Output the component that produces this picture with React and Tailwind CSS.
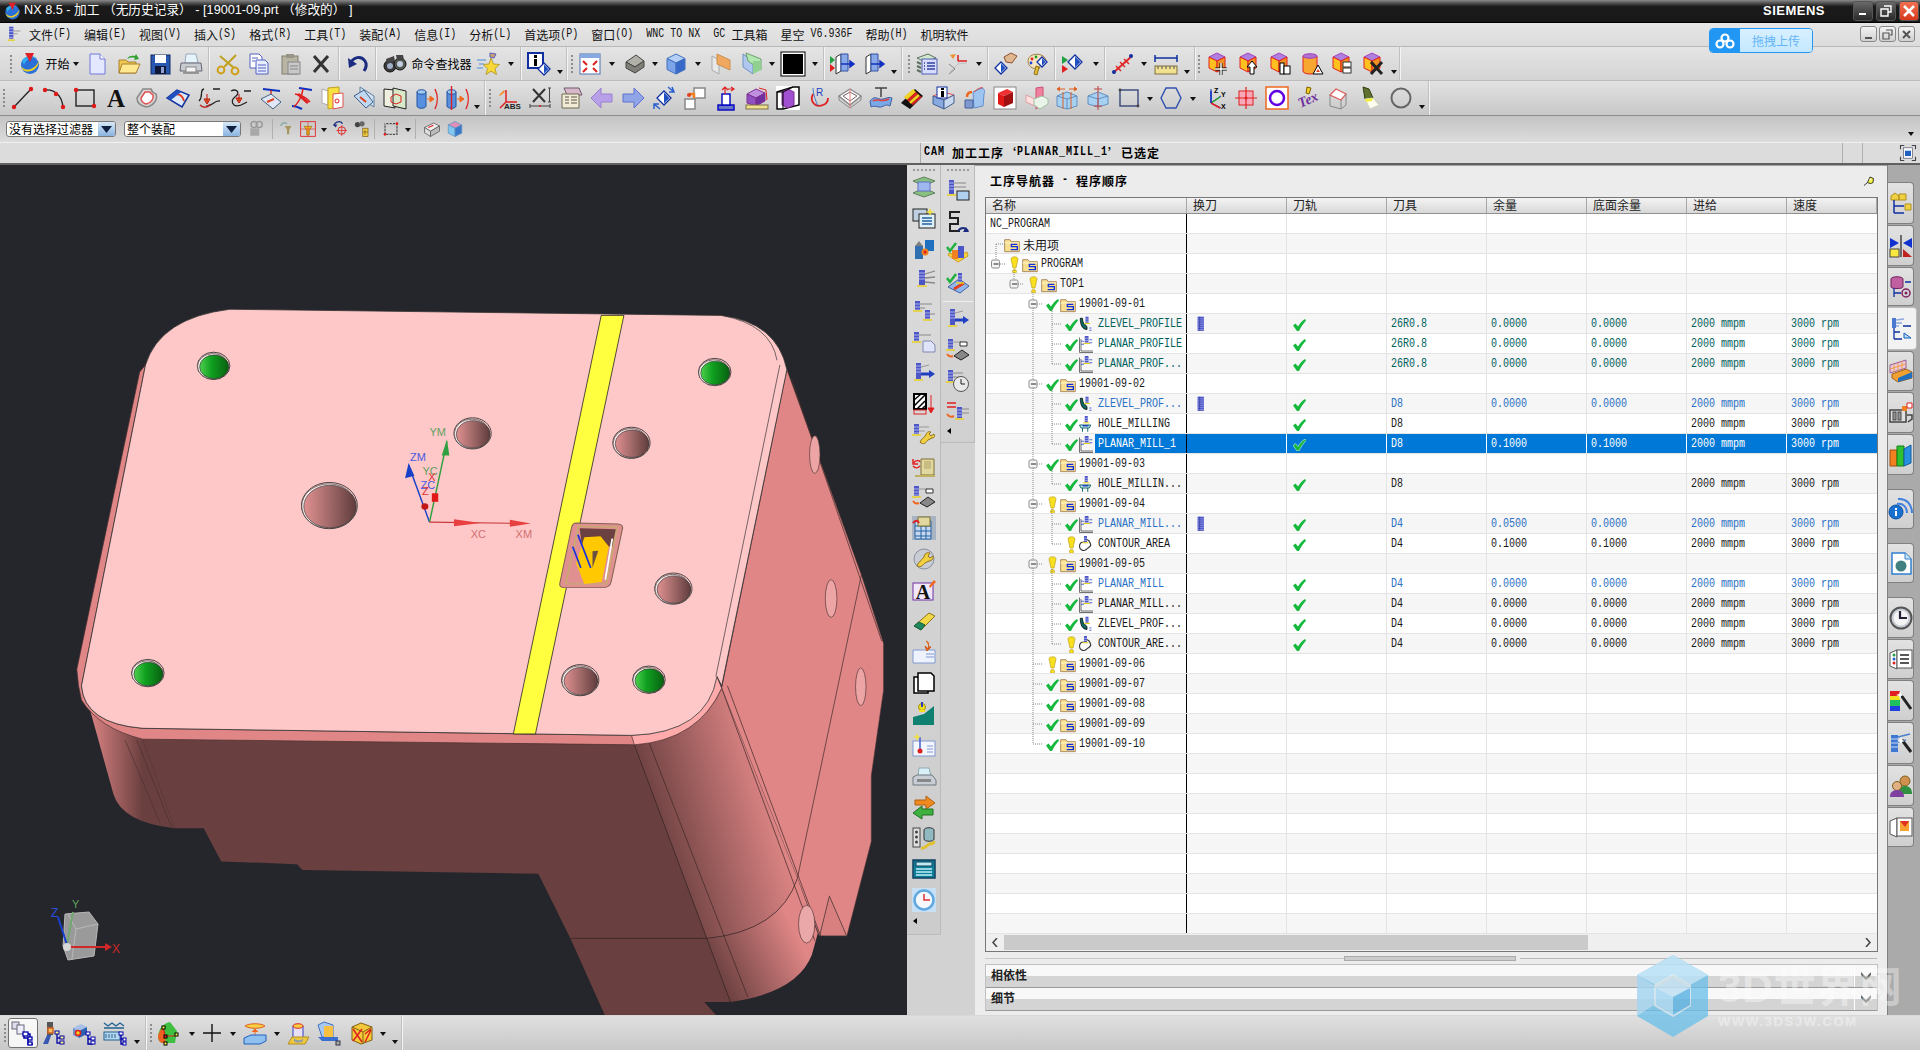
import React from "react";

const P = (d, f = "none", s = "none", w = 1) => <path d={d} fill={f} stroke={s} strokeWidth={w} />;
const R = (x, y, w, h, f = "none", s = "none", sw = 1) => <rect x={x} y={y} width={w} height={h} fill={f} stroke={s} strokeWidth={sw} />;
const C = (x, y, r, f = "none", s = "none", sw = 1) => <circle cx={x} cy={y} r={r} fill={f} stroke={s} strokeWidth={sw} />;
const mill = (x = 4, y = 2, h = 12, w = 5) => (
  <g>
    <rect x={x} y={y} width={w} height={h} fill="#4c56c6" />
    <path d={`M${x} ${y + 3}h${w}M${x} ${y + 6}h${w}M${x} ${y + 9}h${w}`} stroke="#c8ccf4" strokeWidth=".8" />
    <path d={`M${x - 2} ${y + h + 1}h${w + 4}`} stroke="#e8d020" strokeWidth="1.5" />
  </g>
);
const cube = (t, l, r, s = "none") => <g>{P("M12 2l9 4.5-9 4.5-9-4.5z", t, s)}{P("M3 6.5l9 4.5v11l-9-4.5z", l, s)}{P("M21 6.5l-9 4.5v11l9-4.5z", r, s)}</g>;
const pcube = (extra) => <g>{P("M11 1l8 4-8 4-8-4z", "#b080e0", "#a040c0")}{P("M3 5l8 4v11l-8-4z", "#ffc020", "#e02020")}{P("M19 5l-8 4v11l8-4z", "#f09020", "#e02020")}{extra}</g>;
const diamond = (x, y, r = 5) => <g>{P(`M${x} ${y - r}l${r} ${r}-${r} ${r}-${r}-${r}z`, "#fff", "#1030a0", 1.3)}{P(`M${x} ${y - r + 1.5}l${r - 1.5} ${r - 1.5}-${r - 1.5} ${r - 1.5}z`, "#2050c0")}</g>;
const dot = (x, y, r = 1.8) => C(x, y, r, "#e01818");
const folderIcon = (
  <g>{P("M1 4h8l2 3h12v15H1z", "#f8e090", "#a08050", 1.3)}{P("M1 9h22", "none", "#fff6c8", 1.5)}{P("M20 11h-9v3.500h9v4.500H10", "none", "#1030e0", 2)}</g>
);

const I = {
  logo: <g>{C(12, 13, 9, "#2a70d8")}{P("M3 14c5 7 14 3 18-5-1 9-10 13-16 9z", "#f0d020")}{P("M4 8c4-4 10-5 15-2-6-1-11 1-13 7z", "#30b0f0")}{P("M7 1h9l-4 9z", "#e02028")}</g>,
  new: <g>{P("M5 2h10l5 5v15H5z", "#e4e8ff", "#7078d8")}{P("M15 2v5h5", "#fff", "#7078d8")}</g>,
  open: <g>{P("M2 8h7l2 2h8v11H2z", "#f0c850", "#a88030")}{P("M5 12h18l-4 9H2z", "#ffe890", "#a88030")}{P("M10 7c1-3 5-4 8-3l1-2 3 5-5 1 1-2c-3-1-6 0-8 1z", "#30a030")}</g>,
  save: <g>{R(3, 3, 19, 19, "#2858b0", "#102860")}{R(7, 3, 11, 8, "#fff")}{R(7, 14, 11, 8, "#101838")}{R(13, 15, 3, 6, "#90a0d0")}</g>,
  print: <g>{P("M7 2h10l2 9H6z", "#e8f4fc", "#9ab")}{P("M2 11h20l1 8H1z", "#c8ccd0", "#667")}{R(4, 19, 16, 3, "#999")}{R(7, 15, 10, 5, "#f4f4f4", "#888")}</g>,
  cut: <g>{P("M20 3L8 15M4 4l14 12", "none", "#c0a020", 2)}{C(5, 18, 3.4, "none", "#d0a018", 2)}{C(19, 19, 3.4, "none", "#d0a018", 2)}</g>,
  copy: <g>{P("M3 2h9l3 3v11H3z", "#fff", "#5060c0")}{P("M9 8h9l3 3v11H9z", "#e8ecff", "#5060c0")}{P("M11 13h8M11 16h8M11 19h8M5 6h6M5 9h3", "none", "#5060c0")}</g>,
  paste: <g>{R(4, 4, 16, 18, "#b8b4a4", "#807c70")}{R(8, 2, 8, 4, "#989488")}{R(10, 10, 12, 12, "#c8c8c8", "#888")}{P("M12 14h8M12 17h8", "none", "#888")}</g>,
  del: <g>{P("M5 4l14 16M19 4L5 20", "none", "#333", 3)}</g>,
  undo: <g>{P("M4 12c3-7 11-9 15-3 2 3 1 7-1 10", "none", "#1c2c80", 3)}{P("M2 6l1 10 8-4z", "#1c2c80")}</g>,
  binoc: <g>{C(7, 14, 6, "#3a3a3a", "#111")}{C(17, 12, 6, "#555", "#111")}{C(7, 14, 3, "#a0b0c8")}{C(17, 12, 3, "#c0d0e0")}{P("M3 7l8-3 1 5-8 3zM13 3l7 0 1 5h-7z", "#444")}</g>,
  star: <g>{P("M14 6l2.5 6 6 .5-4.5 4 1.5 6-5.500-3.300L9 22.500l1.500-6-4.500-4 6-.5z", "#f8d838", "#b8a030")}{P("M0 8h9M2 12h5M0 16h6", "none", "#78a8e0", 1.5)}{P("M13 1l6 1-2 4-4-1z", "#d0a070", "#5060c0")}</g>,
  info: <g>{R(1, 1, 15, 15, "#fff", "#1030a0", 2)}{R(7, 3, 3, 3, "#000")}{R(7, 7, 3, 7, "#000")}{diamond(17, 17, 6)}</g>,
  fit: <g>{R(2, 2, 20, 20, "#fff", "#5070b0")}{R(2, 2, 20, 4, "#88a8e0")}{P("M5 9l4 4M19 9l-4 4M5 20l4-4M19 20l-4-4", "none", "#e02020", 2)}</g>,
  shade: <g>{P("M3 10l10-7 8 6-9 6z", "#b0b0a8", "#444")}{P("M3 10v6l9 5 9-6V9l-9 6z", "#808078", "#444")}</g>,
  cube: cube("#b4d0f4", "#7ca4e8", "#3868c8", "#4070c0"),
  glass1: <g>{P("M3 4l7 4v14l-7-4z", "#e8e8e8", "#aaa")}{P("M8 2l13 6v10L8 12z", "#f0a860", "#c89050")}</g>,
  glass2: <g>{P("M3 2l10 7v13L3 15z", "#b0c8f0", "#7090c0")}{P("M6 1l15 6v11L8 9z", "#b0e8b0", "#70a070")}{P("M13 9l8 0v9l-8 4z", "#90d090")}</g>,
  black: <g>{R(0, 0, 24, 24, "#fff", "#000", 1)}{R(2, 2, 20, 20, "#000")}</g>,
  view1: <g>{P("M0 4v8l5-4z", "#20a040")}{P("M0 12v8l5-4z", "#e02020")}{P("M6 5l5-3v17l-5 3z", "#fff", "#333")}{P("M11 2l7 0v17h-7z", "#88a8e8", "#3050a0")}{P("M11 12h9M20 9l4 3-4 3z", "#1030c0", "#1030c0", 1.5)}</g>,
  view2: <g>{P("M3 5l5-3v17l-5 3z", "#fff", "#333")}{P("M8 2l7 0v17H8z", "#88a8e8", "#3050a0")}{P("M8 12h9M17 9l4 3-4 3z", "#1030c0", "#1030c0", 1.5)}</g>,
  list: <g>{P("M2 6l11-4 8 4-11 4z", "#d0e8d0", "#607060")}{P("M2 10l4 2M2 14l4 2M2 18l4 2", "none", "#607060", 2)}{R(7, 7, 15, 15, "#d8dcff", "#5060b0")}{P("M12 11h8M12 14h8M12 17h8M9 11h1M9 14h1M9 17h1", "none", "#3040a0", 1.3)}</g>,
  wcs: <g>{P("M12 12v-9M12 12l9-1M12 12l-8 8", "none", "#c0c0c0", 1)}{P("M12 9v-6M12 9h9", "none", "#e02020", 1.5)}{P("M4 3l6-1-3 5z", "#f09030")}{P("M3 12l6 5-6 5", "none", "#888")}</g>,
  hand: <g>{P("M10 5l7-4 6 3-5 7-6-1z", "#e0b890", "#905030")}{diamond(7, 16, 6)}</g>,
  palette: <g>{P("M3 9c0-6 8-8 13-6 6 2 6 8 2 9-3 1-4 2-3 4-4 2-12 0-12-7z", "#f4e4c0", "#a08040")}{C(7, 7, 1.4, "#e02020")}{C(11, 5, 1.4, "#20a020")}{C(6, 11, 1.4, "#2040e0")}{diamond(17, 10, 5)}{P("M9 22l2-8 3 1-2 8z", "#e0c030", "#907020")}</g>,
  tri: <g>{P("M0 4v8l6-4z", "#20a040")}{P("M0 13v8l6-4z", "#e02020")}{diamond(13, 10, 7)}</g>,
  tick: <g>{P("M2 21L21 4", "none", "#e02828", 2)}{P("M5 14l5 5M9 10l5 5M13 7l5 5", "none", "#e02828", 1.5)}{C(3, 20, 2, "#1030a0")}{C(20, 4, 2, "#1030a0")}</g>,
  ruler: <g>{P("M1 6h22M1 3v7M23 3v7", "none", "#1030a0", 1.5)}{R(1, 14, 22, 8, "#f0e090", "#807040")}{P("M4 14v3M8 14v3M12 14v3M16 14v3M20 14v3", "none", "#555")}</g>,
  pmove: pcube(<g>{P("M15 11v12M9 17h12", "none", "#000", 3)}{P("M15 11v12M9 17h12", "none", "#fff", 1.5)}</g>),
  pup: pcube(<g>{P("M15 9l5 6h-3v7h-4v-7h-3z", "#fff", "#000")}</g>),
  phand: pcube(<g>{R(12, 11, 4, 11, "#fff", "#000")}{R(16, 14, 6, 8, "#fff", "#000")}</g>),
  cylT: <g>{P("M4 4v15c0 4 14 4 14 0V4z", "#f8a830", "#e02020")}{P("M4 4c0-3 14-3 14 0s-14 3-14 0z", "#b070d0", "#a040c0")}{P("M14 22l5-9 5 9z", "#fff", "#000")}{P("M17 20l2-3 2 3z", "#e04020")}</g>,
  pcopy: pcube(<g>{R(13, 10, 8, 5, "#fff", "#333")}{R(13, 16, 8, 5, "#fff", "#333")}</g>),
  px: pcube(P("M10 10l11 12M21 10L10 22", "none", "#222", 3)),

  line: <g>{P("M3 21L20 3", "none", "#222", 1.3)}{dot(3, 21, 2.2)}{dot(20, 3, 2.2)}</g>,
  arc: <g>{P("M3 4c10-1 17 6 18 17", "none", "#222", 1.3)}{dot(3, 4, 2.2)}{dot(21, 21, 2.2)}{dot(14, 8, 2.2)}</g>,
  rectT: <g>{R(3, 4, 18, 16, "none", "#222", 1.4)}{dot(3, 4, 2.2)}{dot(21, 20, 2.2)}</g>,
  letterA: <text x="12" y="21" textAnchor="middle" fontFamily="'Liberation Serif',serif" fontWeight="700" fontSize="25" fill="#111">A</text>,
  sketch: <g>{P("M2 12l6-9h8c1 3 2 4 5 5 2 5-2 12-10 13-5-1-9-4-9-9z", "none", "#888", 1.5)}{P("M6 12l4-6h5c1 2 2 2 3 3 1 4-2 8-7 9-3-1-5-3-5-6z", "#fff", "#e05050", 1.5)}</g>,
  surf: <g>{P("M1 12l10-8 12 5-7 12z", "#dde8f8", "#1030a0", 1.5)}{P("M10 8c4 0 7 3 8 7", "none", "#e04020", 2)}{P("M1 12l10-8 4 2-10 8z", "#2050c0")}</g>,
  curve1: <g>{P("M2 15c5-5 0-11 5-12M9 20c6 1 8-6 14-5M16 3h7", "none", "#222", 1.3)}{P("M10 8v8M7 13l3 5 3-5z", "#e08020", "#c01010", 1)}{P("M3 19c3 3 8 3 10-1", "none", "#c02020", 1.5)}</g>,
  curve2: <g>{P("M3 5c6-3 9 2 5 5s-5 6-2 9c4 3 9-1 13-3M16 5h7", "none", "#222", 1.3)}{P("M11 8v7M8 12l3 5 3-5z", "#e08020", "#c01010", 1)}</g>,
  plane1: <g>{P("M4 3l17 2", "none", "#1030c0", 2)}{P("M12 4v9", "none", "#c02020", 1.3)}{P("M2 13l10-5 10 8-8 7z", "#e0e8f8", "#406080", 1)}{P("M8 16l7-3", "none", "#e04020", 2)}</g>,
  trim: <g>{P("M9 2l13 2M2 20c4 0 8 2 10 3", "none", "#1030c0", 2)}{P("M13 3c-1 7-4 13-9 18M5 8c5 1 10 2 15 8", "none", "#e02020", 1.6)}{P("M8 8l10 9", "none", "#e02020", 3)}</g>,
  doc: <g>{P("M1 3l6 2v14l-6-2z", "#fff", "#aaa")}{P("M7 2l11-1v20l-11 2z", "#f8e040", "#c0a020")}{P("M12 8l10-1v14l-10 2z", "#fff", "#e05050")}{C(16, 15, 2, "none", "#e02020")}</g>,
  planes: <g>{P("M8 1l14 9v11L8 12z", "#d0e0f0", "#6080a0")}{P("M2 10l10-6 9 12-7 6z", "#c0d8f0", "#406090")}{P("M8 11l6 5", "none", "#e04020", 2)}</g>,
  boxes: <g>{P("M1 3l11 1v18L1 20z", "#f0f0e0", "#222")}{P("M10 2l13 3v18l-13-3z", "#d8e8c8", "#222")}{P("M8 11l5-3 5 2v6l-5 2-5-2z", "none", "#e02020")}</g>,
  cylR1: <g>{P("M3 6v14c0 3 9 3 9 0V6z", "#5890e0", "#2050a0")}{P("M3 6c0-3 9-3 9 0s-9 3-9 0z", "#a0c8f0", "#2050a0")}{P("M13 13h5M16 10l4 3-4 3z", "#f06820", "#f06820")}{P("M21 3c3 6 3 14 0 20", "none", "#e02020", 1.4)}</g>,
  cylR2: <g>{P("M2 6v14c0 3 9 3 9 0V6z", "#5890e0", "#2050a0")}{P("M2 6c0-3 9-3 9 0s-9 3-9 0z", "#a0c8f0", "#2050a0")}{P("M6.500 0v24", "none", "#e02020", 1.4)}{P("M12 13h5M15 10l4 3-4 3z", "#f06820", "#f06820")}{P("M21 3c3 6 3 14 0 20", "none", "#e02020", 1.4)}</g>,
  abs: <g>{P("M9 16V4M9 16h11M9 16l-6 6", "none", "#e02020", 1.5)}{P("M2 9l5-5 1 2-5 4z", "#f09030")}<text x="7" y="23" fontFamily="'Liberation Sans',sans-serif" fontWeight="700" fontSize="8" fill="#222">ABS</text></g>,
  dim: <g>{P("M5 3l12 13M17 3L5 16", "none", "#333", 2)}{P("M20 2h3M21.500 2v14M20 16h3M2 20h20M2 18v4M22 18v4", "none", "#444")}{dot(12, 20, 1)}</g>,
  sheets: <g>{P("M5 2h15l3 7H8z", "#d8b8c8", "#705870")}{P("M3 8h17v14H3z", "#f0ecd8", "#706850")}{P("M6 11h4M12 11h6M6 14h4M12 14h6M6 17h4M12 17h6", "none", "#605040")}</g>,
  arrowL: <g>{P("M22 8v8H11v6L1 12 11 2v6z", "#b8a0e8", "#9880d0")}</g>,
  arrowR: <g>{P("M2 8v8h11v6l10-10L13 2v6z", "#90a4e8", "#6070d0")}</g>,
  spin: <g>{diamond(12, 12, 7)}{P("M16 1l6 5M20 1l2 5-5 0M2 18l6 5M2 23l0-5 5 0", "none", "#2860d0", 1.5)}</g>,
  sq2: <g>{R(11, 2, 11, 10, "#fff", "#888", 1.5)}{R(2, 13, 10, 10, "#fff", "#888", 1.5)}{P("M6 8h5v4", "none", "#f08020", 2.500)}{C(6, 9, 2, "#e04020")}</g>,
  extrude: <g>{R(4, 19, 16, 5, "#6878c8", "#0000c0", 1.4)}{R(8, 8, 8, 11, "#fff", "#0000c0", 1.4)}{P("M11 8V2M8 4l3-3 3 3M14 3h5M17 1l3 2-3 2", "none", "#e02020", 1.2)}</g>,
  pruler: <g>{P("M2 8l9-5 9 4-9 5z", "#c090e0", "#803090")}{P("M2 8l9 4v8l-9-3z", "#9050c0", "#803090")}{P("M20 7l-9 5v8l9-5z", "#7030a0", "#803090")}{R(1, 19, 22, 4, "#f0e090", "#807040")}{P("M14 2l7 2 1 10", "none", "#e02020", 1)}</g>,
  pbox: <g>{R(0, 0, 24, 24, "#fff")}{P("M1 6l16-5h6v18l-16 4H1z", "none", "#000", 1.5)}{P("M6 6l6-3 6 3v13l-6 3-6-3z", "#a050d0", "#803090")}{P("M1 6h6v17M7 6l10-5", "none", "#000", 1)}</g>,
  rev: <g>{P("M6 8c-4 8 3 14 10 11 3-1 5-4 5-7", "none", "#e02020", 1.8)}<text x="9" y="10" fontFamily="'Liberation Sans',sans-serif" fontSize="10" fill="#2040c0">R</text>{P("M6 2c0 6 3 14 5 18", "none", "#2060c0", .8)}</g>,
  wire: <g>{P("M1 10l11-7 11 7-11 9z", "#fff", "#888", 1.4)}{P("M5 10l7-4 7 4-7 5z", "#fff", "#806060")}{P("M1 10v4l11 8 11-8v-4", "none", "#888")}{P("M12 3v19", "none", "#e08080")}</g>,
  fsurf: <g>{P("M1 15c4-5 6-3 10-2s8-3 12-1l-2 8c-5-3-7 2-11 1s-6-1-8 0z", "#78a8e8", "#4060a0")}{P("M6 2h12M12 2v9", "none", "#444", 1.5)}{P("M4 15c5-3 8 2 16-2", "none", "#e04040", 1.5)}</g>,
  stripes: <g>{P("M1 17L15 3l8 7-13 13z", "#111")}{P("M4 11l9-8 3 3-9 8z", "#f0d020")}{P("M7 14l9-8 2 2-9 8z", "#e02020")}{P("M9 16l9-8 2 2-9 8z", "#f0d020")}{P("M11 18l9-8 2 1-9 8z", "#e02020")}</g>,
  infoBox: <g>{P("M2 10l10-4 11 3-10 5z", "#e8e8e8", "#e05050")}{P("M2 10l11 4v9L2 18z", "#88a8e0", "#406090")}{P("M23 9l-10 5v9l10-6z", "#c8d8f0", "#406090")}{R(6, 1, 10, 11, "#fff", "#1030a0")}{R(10, 2, 3, 2, "#000")}{R(10, 5, 3, 6, "#000")}</g>,
  cyl2: <g>{P("M11 6l9-4c3 1 3 4 2 6l-1 12-9 2z", "#a0c4f0", "#6090d0")}{P("M12 6c3-3 7-5 9-4", "none", "#e04040")}{P("M3 14h8v8H3z", "#8098d0", "#406090")}{P("M5 11c0-4 3-5 5-5", "none", "#f06820", 2.500)}</g>,
  redCube: <g>{R(1, 1, 22, 22, "#fff", "#888")}{P("M5 7l9-4 6 3-9 4z", "#f03030")}{P("M5 7l6 3v11l-6-3z", "#e01818")}{P("M20 6l-9 4v11l9-4z", "#a01010")}</g>,
  slice: <g>{P("M2 9l9 4v7l-9-4z", "#ffe0e0", "#e0a0a0")}{P("M12 2l7-1v17l-7 5z", "#f080a0", "#d05070")}{P("M10 13l8-3 6 3-8 4z", "#f0f8f0", "#a0c0a0")}{P("M10 13v6l6 4 8-5v-5", "#e8f4e8", "#a0c0a0")}</g>,
  block1: <g>{P("M2 10l10-4 10 4v10l-10 3-10-3z", "#a8d0f0", "#6090c0")}{P("M2 10l10 3 10-3M12 13v10", "none", "#6090c0")}{P("M8 6v17M16 6v17", "none", "#e06020")}{P("M5 3h5M5 1l-3 2 3 2M14 3h5M19 1l3 2-3 2", "#e06020", "#e06020")}</g>,
  block2: <g>{P("M2 10l10-4 10 4v8l-10 3-10-3z", "#a8d0f0", "#6090c0")}{P("M2 10l10 3 10-3M12 13v8", "none", "#6090c0")}{P("M12 0v24M8 3h8M8 20h8", "none", "#c04040")}</g>,
  rectS: <g>{R(3, 4, 18, 16, "none", "#405080", 1.5)}{C(3, 4, 1.4, "#444")}{C(21, 20, 1.4, "#444")}</g>,
  hexS: <g>{P("M7 2h10l5 10-5 10H7L2 12z", "none", "#3050b0", 1.4)}</g>,
  xyz: <g>{P("M8 17V3M8 17l10-7M8 17l10 5", "none", "#1030c0", 1)}{P("M8 17l9-6", "none", "#20a020", 1.5)}{P("M8 17l9 5", "none", "#e02020", 1.5)}{P("M8 17V5", "none", "#1030c0", 1.5)}<text x="11" y="7" fontFamily="'Liberation Sans',sans-serif" fontWeight="700" fontSize="7">Z</text><text x="18" y="11" fontFamily="'Liberation Sans',sans-serif" fontWeight="700" fontSize="7">Y</text><text x="18" y="23" fontFamily="'Liberation Sans',sans-serif" fontWeight="700" fontSize="7">X</text></g>,
  target: <g>{R(5, 5, 14, 14, "#f8a8b8", "#e02020")}{P("M12 1v22M1 12h22", "none", "#e02020", 1.2)}{C(12, 12, 1.5, "#e02020")}</g>,
  circS: <g>{R(1, 1, 22, 22, "#fff", "#f06820", 1.5)}{C(12, 12, 7, "none", "#6000e0", 2.500)}</g>,
  tex: <g><text x="1" y="18" fontFamily="'Liberation Serif',serif" fontWeight="700" fontStyle="italic" fontSize="14" fill="#7030a0" transform="rotate(-25 12 12)">Tex</text>{P("M11 1l4 1-2 6-3-1z", "#f0d020", "#806000")}</g>,
  faceS: <g>{P("M3 9l6-6 10 5-5 6z", "#fff", "#e06060", 1.3)}{P("M3 9v11l11 3v-9M19 8v11l-5 4", "none", "#888", 1)}</g>,
  lamp: <g>{P("M5 1l6 2 4 9-8 1z", "#607030", "#304010")}{P("M7 13l8-1 6 7-9 4z", "#fffff0", "#d0d0c0")}{P("M7 13l8-1-1 3-6 1z", "#f0f040")}</g>,
  circle: <g>{C(12, 12, 9.5, "none", "#666", 2)}</g>,

  nav1: <g>{P("M1 6l11-4 11 4-11 5z", "#88c080", "#608060")}{P("M1 18l11-5 11 5-11 4z", "#88c080", "#608060")}{R(6, 7, 12, 9, "#a0b8f0", "#6070c0")}</g>,
  screens: <g>{R(1, 3, 14, 12, "#c0d0e0", "#222")}{R(7, 8, 16, 14, "#e0f0f8", "#222")}{P("M10 12h10M10 15h10M10 18h10", "none", "#2060a0", 1.5)}{P("M18 1l1 4 4 1-4 1-1 3-1-3-4-1 4-1z", "#f0e040")}</g>,
  blueCyl: <g>{P("M3 9h8v13H3z", "#3070b0")}{P("M3 9l4-5 4 5z", "#808080")}{R(13, 3, 9, 11, "#2070c0")}{C(13, 15, 3.5, "#f08020")}{C(13, 15, 1.5, "#e02020")}</g>,
  mill1: <g>{mill(7, 2, 15, 6)}{P("M13 6l10-3M13 10l10-1M13 14l10 1", "none", "#888", 1.3)}</g>,
  mill2: <g>{mill(3, 2, 9, 5)}{mill(13, 11, 9, 5)}{P("M8 5h12M8 9h5M18 15h5", "none", "#888")}</g>,
  millPages: <g>{mill(2, 2, 9, 5)}{P("M7 5h12", "none", "#888")}{P("M11 11h8l4 4v7H11z", "#e0e4f8", "#8088b0")}</g>,
  millArrow: <g>{mill(4, 2, 16, 5)}{P("M9 13h9", "none", "#2040c0", 3)}{P("M17 9l6 4-6 4z", "#2040c0")}{P("M9 6l8-2", "none", "#999")}</g>,
  hatch: <g>{R(2, 2, 12, 15, "#fff", "#000", 2)}{P("M2 8l7-6M2 14l11-11M5 17l8-8M10 17l3-3", "none", "#000", 1.5)}{P("M19 3v16M16 16l3 5 3-5z", "#e02020", "#e02020")}{R(2, 18, 12, 4, "none", "#e02020")}</g>,
  millWrench: <g>{mill(2, 1, 10, 5)}{P("M7 4h10M7 8h6", "none", "#999")}{P("M9 20c4 2 5-1 7-3l4-2c3 0 3-3 2-4l-3 2-2-2 2-2c-3-1-5 1-5 3-2 3-5 4-6 7z", "#f0d040", "#907020")}</g>,
  machine: <g>{P("M9 5h13v16H9z", "#e0d8a0", "#807030")}{P("M3 21h20v2H3z", "#c0b060")}{R(12, 7, 7, 8, "#c8bc80")}{P("M2 9c1-3 5-3 6-1", "none", "#e02020", 1.5)}{P("M1 12c3 3 5 2 7 0M1 5v5h5", "none", "#e02020", 1.5)}</g>,
  simul: <g>{mill(2, 1, 10, 5)}{P("M7 4h8", "none", "#999")}{P("M8 18l8-6 7 5-8 5z", "#888", "#222")}{P("M14 4h7v4h-7z", "#fff", "#333")}{P("M1 16c2 3 4 3 6 2", "none", "#f06820", 2)}</g>,
  machineT: <g>{R(0, 0, 24, 24, "#a8b4c4")}{P("M3 5h16v18H3z", "#c8d8f0", "#2060a0")}{P("M3 10h16M3 15h16M3 20h16M9 10v13M14 10v13", "none", "#2060a0")}{P("M6 1h12v9H6z", "#e0d8a0", "#807030")}{P("M1 7c2-3 5-3 6 0", "none", "#e02020", 2)}</g>,
  wrench: <g>{C(12, 12, 10, "#c8ccd4", "#8890a0")}{P("M5 19c4 2 6-1 8-3l4-2c3 0 5-3 4-5l-3 2-2-2 2-3c-3-1-6 1-6 4-2 3-6 5-7 9z", "#f0d040", "#907020")}</g>,
  textA: <g>{R(1, 5, 20, 17, "#f0e8f8", "#7030a0")}<text x="11" y="21" textAnchor="middle" fontFamily="'Liberation Serif',serif" fontWeight="700" fontSize="20" fill="#111">A</text>{P("M17 8l5-6 2 2-6 6z", "#f06820")}</g>,
  eraser: <g>{P("M2 17L17 4l6 3L9 21z", "#f0d848", "#907020")}{P("M2 17l5-4 6 3-4 5z", "#208860", "#106040")}</g>,
  docArrow: <g>{P("M1 10h22v13H1z", "#eef2fc", "#8098d0")}{P("M14 14h8M14 17h8", "none", "#8098d0")}{P("M14 1c3 1 3 3 2 8l-3-3 2 5 4-4-2 0", "#f08020", "#d05010")}</g>,
  pages2: <g>{R(2, 6, 14, 16, "#fff", "#000", 1.5)}{P("M6 2h13l3 3v15H6z", "#fff", "#000", 1.5)}</g>,
  slope: <g>{P("M1 23v-8l11-3 10-8v19z", "#108070")}{C(10, 5, 3.5, "#f0e020", "#a09010")}{P("M10 0v5", "none", "#3040c0", 2)}{P("M7 9h6", "none", "#f0e020", 2)}</g>,
  docStar: <g>{R(1, 8, 22, 15, "#f4f6fe", "#8098d0")}{P("M15 13h6M15 16h6M15 19h6", "none", "#8098d0")}{P("M8 4v13", "none", "#4060d0", 1.5)}{C(8, 18, 2.500, "#e02020")}{P("M5 0l1 3 3 1-3 1-1 3-1-3-3-1 3-1z", "#f0e040")}</g>,
  printer2: <g>{P("M7 4h10l2 8H6z", "#d8f0f8", "#90a8b0")}{P("M1 13l4-2h15l4 5v5H1z", "#c8ccd4", "#707880")}{R(5, 15, 14, 3, "#888")}</g>,
  swap: <g>{P("M3 5h11V1l9 7-9 6v-4H3z", "#f08a20", "#b06010")}{P("M21 14H10v-3l-9 7 9 6v-4h11z", "#40b040", "#207020")}</g>,
  toolDb: <g>{R(1, 2, 7, 19, "#e0e0e0", "#444")}{C(4.500, 6, 1.5, "#444")}{C(4.500, 11, 1.5, "#444")}{C(4.500, 16, 1.5, "#444")}{P("M12 4c0-3 10-3 10 0v9c0 3-10 3-10 0z", "#90b8c0", "#333")}{P("M9 22c3 1 6-2 8-4 3 0 5-1 5-3", "none", "#e0c030", 3)}</g>,
  calc: <g>{R(1, 3, 22, 18, "#108098", "#104060", 1.5)}{R(4, 5, 16, 4, "#c0e8f0", "#104060")}{P("M4 12h16M4 15h16M4 18h16", "none", "#c0f0f8", 1.4)}</g>,
  clockB: <g>{R(0, 0, 24, 24, "#c8e0f4")}{C(12, 12, 9.5, "#f4f8fc", "#60a8e0", 2.500)}{P("M12 6v6h6", "none", "#e03030", 1.5)}</g>,
  millScreen: <g>{mill(3, 1, 14, 5)}{P("M8 4h12M8 8h12", "none", "#888")}{R(11, 12, 12, 9, "#b0d0f0", "#222")}</g>,
  sCurve: <g>{P("M14 2H4v6h8v6H4v7h10", "none", "#222", 2)}{P("M12 21c3-4 7-4 10 0", "none", "#1c2c80", 2)}{P("M20 17l3 5-6 0z", "#1c2c80")}</g>,
  ok1: <g>{P("M2 14l10 7 10-6-1-4-9 4-9-3z", "#f8d040", "#d0a020")}{R(12, 5, 6, 12, "#4c56c6")}{R(6, 9, 6, 9, "#f08020")}{P("M1 6l3 4 6-8", "none", "#20b040", 2.500)}</g>,
  ok2: <g>{P("M2 15l11-8 10 7-9 7z", "#90b8f0", "#4060a0")}{P("M8 17l10-6", "none", "#e04020", 3)}{P("M1 6l3 4 6-8", "none", "#20b040", 2.500)}{mill(12, 1, 9, 4)}</g>,
  millClock: <g>{mill(2, 1, 11, 5)}{P("M7 4h10M7 8h6", "none", "#888")}{C(15, 15, 7.5, "#e8e8e8", "#555")}{P("M15 10v5h4", "none", "#222")}</g>,
  millArrows: <g>{P("M1 3h9M1 7h9", "none", "#e02020", 1.5)}{mill(11, 7, 11, 5)}{P("M16 9h7M16 13h7", "none", "#888")}{P("M1 14c2 3 5 3 7 2", "none", "#f06820", 2)}</g>,
  tAsm: <g>{P("M2 5l4-3 4 3v4H2zM10 3h7v6h-7z", "#f0d040", "#b09020")}{P("M5 9v13M5 15h10M5 22h10", "none", "#1030a0", 1.5)}{P("M16 13h6v6h-6z", "#f0d040", "#b09020")}</g>,
  tMirror: <g>{P("M1 4l9 5-9 5zM23 4l-9 5 9 5z", "#1030d0")}{R(1, 15, 9, 8, "#f8e840", "#444")}{P("M14 23v-8l9 8z", "#c02020")}{P("M12 1v22", "none", "#444", 1.5)}</g>,
  tCon: <g>{P("M2 4c0-3 12-3 12 0v8c0 2-12 2-12 0z", "#c060a0", "#702060")}{P("M5 13v9M5 18h7M16 7h6", "none", "#1030a0", 1.3)}{C(17, 18, 4, "none", "#802060", 1.5)}{C(17, 18, 1.5, "#802060")}</g>,
  tOp: <g>{R(2, 1, 4, 10, "#4c78d0")}{P("M6 3l8-1M6 6l6 0M6 9h3", "none", "#90a8e0", 1.5)}{P("M4 11v11M4 15h6M4 22h8M13 9h8", "none", "#1030a0", 1.3)}{P("M14 21v-5l7 5z", "#c0d8f0", "#1060c0")}</g>,
  tGrid: <g>{P("M1 14V6l16-5v8z", "#e8c8e0", "#a06090")}{P("M5 5v8M9 4v8M13 2v8M1 10l16-5", "none", "#f0a040")}{P("M3 15l14-5 6 3v6l-14 4-6-4z", "#f0a030", "#a06020")}{P("M9 19l14-6v6l-14 4z", "#2070c0")}</g>,
  tMach: <g>{R(1, 9, 16, 12, "#e0e0e0", "#444", 1.5)}{R(4, 11, 3, 8, "#999", "#444")}{R(9, 11, 3, 8, "#999", "#444")}{P("M13 5h5v5h-5z", "#f08020")}{P("M18 2h5v5h-5z", "#fff", "#e02020")}{P("M18 14h5v4l-4 3", "none", "#444", 1.5)}</g>,
  tBook: <g>{P("M1 7h7v16H1z", "#f08020", "#a05010")}{P("M8 3h7v20H8z", "#30c030", "#108010")}{P("M15 6l7-4v18l-7 3z", "#2890e0", "#1060a0")}</g>,
  tInfo: <g>{C(7, 15, 7, "#1870d0", "#1050a0")}{R(6, 11, 2, 2, "#fff")}{R(6, 14, 2, 5, "#fff")}{P("M8 7c6-1 10 3 10 9M9 2c8-1 14 5 14 14", "none", "#4080e0", 2)}</g>,
  tDoc: <g>{P("M3 2h13l6 6v15H3z", "#fff", "#3080d0", 1.5)}{P("M16 2v6h6", "#d0e8f8", "#3080d0")}{C(12, 15, 5.5, "#408080")}</g>,
  tClock: <g>{C(12, 12, 10.5, "#c8ccd4", "#555", 2)}{C(12, 12, 7.5, "#f4f4f4")}{P("M11 5v7h7", "none", "#223", 2.200)}</g>,
  tList: <g>{P("M1 6l7-3v19l-7-3z", "#fff", "#555")}{R(8, 3, 15, 18, "#fff", "#555")}{C(5, 8, 1.5, "#20a040")}{C(5, 12, 1.5, "#2060d0")}{C(5, 16, 1.5, "#e02020")}{P("M11 8h9M11 12h9M11 16h9", "none", "#222", 1.3)}</g>,
  tRain: <g>{R(1, 2, 10, 20, "#20c060")}{R(1, 2, 10, 5, "#e02020")}{R(1, 7, 10, 4, "#f0e020")}{R(1, 17, 10, 5, "#2040e0")}{P("M12 6l10 14", "none", "#222", 3)}{P("M11 2l1 3 3 1-3 1-1 3-1-3-3-1 3-1z", "#fff")}</g>,
  tPick: <g>{R(2, 4, 7, 17, "#3f78d0")}{P("M2 8h7M2 12h7M2 16h7M0 22h13", "none", "#c8d8f4")}{P("M9 6l12-3M9 11l8-2", "none", "#4880d0", 1.5)}{P("M13 9l9 12", "none", "#222", 3)}{P("M12 6l1 3 3 1-3 1-1 2-1-2-3-1 3-1z", "#fff")}</g>,
  tPeople: <g>{C(16, 7, 5, "#d09050", "#806020")}{P("M8 20c0-6 4-8 8-8s7 2 7 8z", "#309040")}{C(8, 12, 4.5, "#e0b080", "#806020")}{P("M1 23c0-5 3-7 7-7s7 2 7 7z", "#8040a0")}</g>,
  tFrame: <g>{P("M1 6l7-3v19l-7-3z", "#fff", "#555")}{R(8, 3, 15, 18, "#fff", "#555")}{R(11, 6, 9, 10, "#f8a030")}{P("M11 6h9l-4 6z", "#e03020")}</g>,

  b1: <g>{R(1, 1, 7, 7, "#dde", "#667")}{R(6, 4, 7, 9, "#eef", "#667")}{P("M13 13h6v4h-6zM17 17v6h5", "none", "#0000a8", 1.5)}{R(12, 11, 5, 4, "#fff", "#0000a8", 1.3)}{R(17, 16, 4, 3, "#fff", "#0000a8", 1.3)}{R(17, 21, 4, 3, "#fff", "#0000a8", 1.3)}</g>,
  b2: <g>{P("M2 23l5-11h4l-4 11z", "#3858b0")}{R(6, 1, 6, 13, "#555")}{R(7, 7, 5, 5, "#f4c060", "#d06020", 1.5)}{P("M16 12v10h5M16 17h5", "none", "#1010a8", 1.4)}{R(14, 10, 4, 3, "#ff8", "#0000a8")}{R(19, 15, 4, 3, "#ff8", "#0000a8")}{R(19, 20, 4, 3, "#ff8", "#0000a8")}</g>,
  b3: <g>{P("M1 7l8-4 6 3-8 4z", "#a8c0e8")}{P("M1 7l6 3v7l-6-3z", "#7090d0")}{P("M15 6l-8 4v7l8-4z", "#3060b0")}{C(6, 12, 2.500, "#f0d020", "#e02020", 1.5)}{P("M16 14v9h5M16 18h5", "none", "#0000a8", 1.4)}{R(14, 11, 4, 3, "#fff", "#0000a8")}{R(19, 16, 4, 3, "#fff", "#0000a8")}{R(19, 20, 4, 3, "#fff", "#0000a8")}</g>,
  b4: <g>{P("M1 2l4 3 4-3 4 3 4-3 4 3", "none", "#206090", 1.2)}{P("M1 7h20", "none", "#206090", 1.5)}{R(1, 11, 16, 8, "#b8d8f0", "#206090")}{P("M3 13v4M6 13v4M9 13v4M12 13v4", "none", "#206090")}{P("M18 13v10h4M18 18h4", "none", "#0000a8", 1.4)}{R(16, 11, 4, 3, "#fff", "#0000a8")}{R(20, 17, 3, 3, "#fff", "#0000a8")}{R(20, 21, 3, 3, "#fff", "#0000a8")}</g>,
  heat: <g>{P("M2 15c1-8 6-13 12-14l7 9-2 12H6c-3-1-4-4-4-7z", "#40c040")}{P("M2 15c1-4 3-7 5-9l3 16H6c-3-1-4-4-4-7z", "#f06020")}{P("M7 6l2 9h10", "none", "#e02020", 1.2)}{R(6, 5, 3, 3, "#ff4", "#000")}{R(8, 14, 3, 3, "#e02020", "#000")}{R(19, 12, 3, 3, "#ff4", "#000")}{R(8, 21, 3, 3, "#ff4", "#000")}</g>,
  plus: <g>{P("M12 3v18M3 12h18", "none", "#111", 1.4)}</g>,
  plat: <g>{P("M2 5c4-3 16-3 20 0-4 3-16 3-20 0z", "#f8d040", "#e06020")}{P("M12 14V9M9 11l3-3 3 3", "#f06820", "#f06820")}{P("M1 17l7-3h15v6l-6 3H1z", "#90c0f0", "#2060c0")}</g>,
  cylB: <g>{P("M7 5v12c0 3 10 3 10 0V5", "#e8e0f0", "#3040c0")}{P("M7 5c0-3 10-3 10 0s-10 3-10 0z", "#f8d040", "#e02020")}{P("M2 23l4-7h17l-4 7z", "#f0c840", "#b09020")}{P("M8 17c2 3 8 3 9 0v3c-2 2-8 2-9 0z", "#90a0a8")}</g>,
  blockU: <g>{P("M2 4l6-3 9 3v12H6z", "#a8c8f0", "#4070c0")}{P("M8 5h9v11H8z", "#f8c040")}{P("M2 16l4 4h16v-4H8z", "#3870d0")}{R(20, 20, 4, 4, "#aaa", "#334")}</g>,
  crate: <g>{P("M2 6l9-4 11 4v13l-11 4-9-4z", "#f4c838", "#806010")}{P("M2 6l11 5 9-5M13 11v12", "none", "#806010")}{P("M3 8l9 13M12 8l-9 12M15 13l6-5M15 21l6-12", "none", "#e02020", 1.5)}</g>,

  sGear: <g>{C(8, 6, 4, "none", "#9a9a9a", 2)}{C(15, 6, 4, "none", "#9a9a9a", 2)}{P("M3 11h12v10H3z", "#a8a8a8")}</g>,
  sWhere: <g>{P("M4 8c0-3 4-6 8-3", "none", "#8aa", 2)}{P("M9 8l9 0-3 5v6h-3v-6z", "#a89860")}</g>,
  sFunnel: <g>{R(1, 1, 22, 22, "none", "#e02020", 1.3)}{P("M6 8h12l-4 6v7h-4v-7z", "#f0c020", "#907010")}{P("M12 1v22M1 12h22", "none", "#e02020", .8)}</g>,
  sSnap: <g>{C(13, 14, 5, "none", "#e02020", 1.3)}{P("M13 7v14M6 14h14", "none", "#e02020", 1)}{P("M3 8c0-6 9-8 11-3", "none", "#1c2c80", 1.8)}{P("M1 6l4 4 2-4z", "#1c2c80")}</g>,
  sBin: <g>{C(6, 6, 3.5, "#444")}{C(12, 5, 3.500, "#666")}{R(13, 11, 7, 11, "#f0d040", "#806020")}{P("M16 13v7M13 16h7", "none", "#806020")}</g>,
  sRect: <g>{R(3, 4, 18, 16, "none", "#222", 1.4)}<path d="M3 4h18v16H3z" fill="none" stroke="#ddd" strokeWidth="1.5" strokeDasharray="2 3" />{dot(3, 20, 2)}{dot(21, 4, 2)}</g>,
  sView: <g>{P("M2 10l12-6 8 4-12 7z", "#eee", "#555")}{P("M2 10l8 5v7l-8-5z", "#ddd", "#555")}{P("M22 8l-12 7v7l12-7z", "#bbb", "#555")}{P("M7 10l7-3", "none", "#e02020", 1.5)}</g>,
  sCube: cube("#e090b8", "#80c8f0", "#3878c8", "#6090c0"),
  pin: <g>{P("M9 15l5-11 7 3-1 8c-3 3-8 2-11 0z", "#f0f040", "#000", 1.5)}{P("M9 15l-7 6", "none", "#000", 1.5)}{C(15, 9, 2, "#fff")}</g>,
  frameIcon: <g>{P("M2 7V2h5M17 2h5v5M22 17v5h-5M7 22H2v-5", "none", "#444", 1.5)}{R(6, 5, 12, 14, "#f4f8ff", "#667")}{R(8, 9, 8, 7, "#2060c0")}</g>,
  nxMenu: <g>{R(3, 1, 6, 17, "#4c56c6")}{P("M3 4h6M3 8h6M3 12h6M3 16h6", "none", "#c8ccf4")}{P("M9 7h10M9 11h6", "none", "#999", 1.4)}{P("M1 20h10", "none", "#e8d020", 2)}</g>,
  bar: <g>{R(5, 1, 9, 20, "#5058c8")}{P("M5 4h9M5 7h9M5 10h9M5 13h9M5 16h9M5 19h9", "none", "#b0b4ee", .8)}{P("M8 1v20", "none", "#303898")}</g>,
  zlevel: <g>{P("M3 3h3c0 7 4 9 6 11v4c-6 0-9-6-9-15z", "#106860", "#000")}{mill(10, 1, 8, 4)}{P("M15 19h3M15 16h3", "none", "#2040c0")}</g>,
  planar: <g>{P("M2 2v20h18M4 4v16h16", "none", "#444", 1)}{mill(9, 0, 9, 5)}{P("M4 7h4M4 11h4M15 5h4M15 9h4", "none", "#2040c0")}</g>,
  hole: <g>{mill(9, 0, 8, 4)}{P("M2 12h15l-2 4H4zM6 16v5M13 16v5", "#d0f0f0", "#106868", 1.3)}{P("M6 13h8", "none", "#2040c0", 2)}</g>,
  contour: <g>{P("M2 14c0-4 3-6 6-6l2-3c4-1 6 3 7 7-1 4-4 3-6 6-4 3-9 0-9-4z", "#fff", "#333", 1.5)}{mill(8, 0, 8, 4)}</g>,
  folder: folderIcon,
};

const Ic = ({ n, s = 24 }) => (
  <svg width={s} height={s} viewBox="0 0 24 24" className="block shrink-0 overflow-visible">{I[n]}</svg>
);

const Arrow = ({ low }) => (
  <svg width="6" height="4" viewBox="0 0 6 4" className={low ? "mt-[17px]" : "mt-[1px]"}><path d="M0 0h6L3 4z" fill="#111" /></svg>
);

const Mixed = ({ t, bold }) =>
  t.split(/([\u4e00-\u9fff‘’]+)/).filter(Boolean).map((p, i) =>
    /[\u4e00-\u9fff‘’]/.test(p) ? (
      <span key={i} className={`font-['Noto_Sans_CJK_SC',sans-serif] text-[12px] leading-none whitespace-pre ${bold ? "font-bold tracking-[1px]" : ""}`}>{p}</span>
    ) : (
      <span key={i} className={`inline-block scale-y-[1.2] font-['Liberation_Mono',monospace] text-[10px] leading-none whitespace-pre ${bold ? "font-bold tracking-[1px]" : ""}`}>{p}</span>
    )
  );

const Grip = () => (
  <div className="flex flex-col gap-[2px]">
    {[0, 1, 2, 3, 4].map((i) => <span key={i} className="block w-[2px] h-[2px] bg-[#8c8c8c]" />)}
  </div>
);

const Bar = ({ items }) => (
  <div className="flex h-full items-stretch">
    {items.map(([n, w], i) => {
      let c;
      if (n === "grip") c = <Grip />;
      else if (n === "a") c = <Arrow />;
      else if (n === "A") c = <Arrow low />;
      else if (n === "s") c = <span className="block w-[2px] h-full border-x border-l-[#c0c0c0] border-r-[#f4f4f4]" />;
      else if (n === "sp") c = null;
      else if (n.startsWith("T:")) c = <span className="font-['Noto_Sans_CJK_SC',sans-serif] text-[12px] text-black whitespace-nowrap">{n.slice(2)}</span>;
      else c = <Ic n={n} />;
      return <div key={i} className="flex items-center justify-center shrink-0" style={{ width: w }}>{c}</div>;
    })}
  </div>
);

const row1 = [["sp",7],["grip",8],["logo",30],["T:开始",25],["a",11],["new",32],["open",31],["save",31],["print",31],["s",6],["cut",31],["copy",31],["paste",31],["del",31],["s",6],["undo",31],["s",6],["binoc",31],["T:命令查找器",63],["star",31],["a",14],["s",5],["info",31],["A",11],["s",4],["grip",6],["fit",30],["a",14],["shade",31],["a",10],["cube",31],["a",14],["glass1",31],["glass2",31],["a",10],["black",31],["a",14],["s",3],["view1",34],["view2",31],["A",8],["s",8],["grip",6],["list",30],["wcs",31],["a",12],["s",6],["hand",30],["palette",31],["s",6],["tri",31],["a",14],["s",4],["tick",31],["a",12],["ruler",31],["A",12],["s",3],["grip",6],["pmove",31],["pup",31],["phand",31],["cylT",31],["pcopy",31],["px",31],["A",11],["s",2]];
const row2 = [["sp",1],["grip",6],["line",31],["arc",31],["rectT",31],["letterA",31],["sketch",31],["surf",31],["curve1",31],["curve2",31],["plane1",31],["trim",31],["doc",31],["planes",31],["boxes",31],["cylR1",31],["cylR2",31],["A",10],["s",5],["grip",6],["abs",31],["dim",31],["sheets",31],["arrowL",31],["arrowR",31],["spin",31],["sq2",31],["extrude",31],["pruler",31],["pbox",31],["rev",31],["wire",31],["fsurf",31],["stripes",31],["infoBox",31],["cyl2",31],["redCube",31],["slice",31],["block1",31],["block2",31],["rectS",31],["a",11],["hexS",31],["a",13],["xyz",31],["target",31],["circS",31],["tex",31],["faceS",31],["lamp",31],["circle",31],["A",11],["s",3]];
const bottomBar = [["sp",2],["grip",6],["b1",30],["b2",30],["b3",32],["b4",30],["A",14],["s",4],["grip",6],["heat",28],["a",20],["plus",20],["a",21],["plat",24],["a",20],["cylB",22],["blockU",38],["crate",29],["a",14],["A",10],["s",3]];

const v1 = ["nav1","screens","blueCyl","mill1","mill2","millPages","millArrow","hatch","millWrench","machine","simul","machineT","wrench","textA","eraser","docArrow","pages2","slope","docStar","printer2","swap","toolDb","calc","clockB"];
const tabs = [["tAsm",182,42],["tMirror",225,41],["tCon",267,39],["tOp",307,43],["tGrid",351,40],["tMach",392,41],["tBook",434,41],["tInfo",489,40],["tDoc",543,40],["tClock",597,41],["tList",639,40],["tRain",680,41],["tPick",722,42],["tPeople",765,41],["tFrame",807,40]];

const tree = [
  { pl: 4, text: "NC_PROGRAM" },
  { pl: 6, st: null, ic: "folder", text: "未用项" },
  { l: 0, st: "w", ic: "folder", text: "PROGRAM" },
  { l: 1, st: "w", ic: "folder", text: "TOP1" },
  { l: 2, st: "k", ic: "folder", text: "19001-09-01" },
  { l: 3, st: "k", ic: "zlevel", text: "ZLEVEL_PROFILE", c: "t", bar: 1, path: 1, v: ["26R0.8","0.0000","0.0000"], f: 1 },
  { l: 3, st: "k", ic: "planar", text: "PLANAR_PROFILE", c: "t", path: 1, v: ["26R0.8","0.0000","0.0000"], f: 1 },
  { l: 3, st: "k", ic: "planar", text: "PLANAR_PROF...", c: "t", path: 1, v: ["26R0.8","0.0000","0.0000"], f: 1 },
  { l: 2, st: "k", ic: "folder", text: "19001-09-02" },
  { l: 3, st: "k", ic: "zlevel", text: "ZLEVEL_PROF...", c: "b", bar: 1, path: 1, v: ["D8","0.0000","0.0000"], f: 1 },
  { l: 3, st: "k", ic: "hole", text: "HOLE_MILLING", path: 1, v: ["D8","",""], f: 1 },
  { l: 3, st: "k", ic: "planar", text: "PLANAR_MILL_1", sel: 1, path: 1, v: ["D8","0.1000","0.1000"], f: 1 },
  { l: 2, st: "k", ic: "folder", text: "19001-09-03" },
  { l: 3, st: "k", ic: "hole", text: "HOLE_MILLIN...", path: 1, v: ["D8","",""], f: 1 },
  { l: 2, st: "w", ic: "folder", text: "19001-09-04" },
  { l: 3, st: "k", ic: "planar", text: "PLANAR_MILL...", c: "b", bar: 1, path: 1, v: ["D4","0.0500","0.0000"], f: 1 },
  { l: 3, st: "w", ic: "contour", text: "CONTOUR_AREA", path: 1, v: ["D4","0.1000","0.1000"], f: 1 },
  { l: 2, st: "w", ic: "folder", text: "19001-09-05" },
  { l: 3, st: "k", ic: "planar", text: "PLANAR_MILL", c: "b", path: 1, v: ["D4","0.0000","0.0000"], f: 1 },
  { l: 3, st: "k", ic: "planar", text: "PLANAR_MILL...", path: 1, v: ["D4","0.0000","0.0000"], f: 1 },
  { l: 3, st: "k", ic: "zlevel", text: "ZLEVEL_PROF...", path: 1, v: ["D4","0.0000","0.0000"], f: 1 },
  { l: 3, st: "w", ic: "contour", text: "CONTOUR_ARE...", path: 1, v: ["D4","0.0000","0.0000"], f: 1 },
  { l: 2, st: "w", ic: "folder", text: "19001-09-06" },
  { l: 2, st: "k", ic: "folder", text: "19001-09-07" },
  { l: 2, st: "k", ic: "folder", text: "19001-09-08" },
  { l: 2, st: "k", ic: "folder", text: "19001-09-09" },
  { l: 2, st: "k", ic: "folder", text: "19001-09-10" },
];
const rows = [...tree, ...Array.from({ length: 9 }, () => ({}))];

const Check = ({ white }) => (
  <svg width="13" height="12" viewBox="0 0 13 12" className="block">
    <path d="M0 6.500l2.500-2 2.500 3C7 4 9 2 12 0l1 1.500C10 5 7.500 8.500 6 12H4z" fill="#14b83c" stroke={white ? "#fff" : "none"} strokeWidth=".5" />
  </svg>
);
const Bang = () => (
  <svg width="9" height="18" viewBox="0 0 9 18" className="block">
    <path d="M1 3c0-3 7-3 7 0l-2 9H3z" fill="#f8e020" stroke="#c0a020" strokeWidth=".7" />
    <circle cx="4.500" cy="15.500" r="2" fill="#f8e020" stroke="#c0a020" strokeWidth=".7" />
  </svg>
);

const Row = ({ r, i }) => {
  const odd = i % 2 === 1;
  const tc = r.sel ? "text-white" : r.c === "t" ? "text-[#00605c]" : r.c === "b" ? "text-[#2a70c4]" : "text-[#181818]";
  const cell = `h-full flex items-center pt-[2px] pl-[4px] border-r border-[#e4e4e4] shrink-0 ${r.sel ? "bg-[#0078d7] border-white" : ""}`;
  return (
    <div className={`flex h-[20px] border-b border-[#e4e4e4] ${odd ? "bg-[#f6f6f6]" : "bg-white"} ${tc}`}>
      <div
        className="w-[201px] shrink-0 h-full flex items-center pt-[2px] border-r border-r-black overflow-hidden"
        style={{ paddingLeft: r.l !== undefined ? 20 + 19 * r.l : r.pl || 0 }}
      >
        {r.ic && (
          <>
            {(r.st !== undefined) && (
              <span className={`flex items-center justify-center shrink-0 ${r.st === null ? "w-[12px]" : "w-[16px]"}`}>
                {r.st === "k" ? <Check /> : r.st === "w" ? <Bang /> : null}
              </span>
            )}
            <span className="w-[16px] flex justify-center shrink-0"><Ic n={r.ic} s={r.ic === "folder" ? 16 : 18} /></span>
          </>
        )}
        <span className={`h-[calc(100%+2px)] -mt-[2px] pt-[2px] flex-1 flex items-center ${r.ic ? "pl-[3px]" : ""} ${r.sel ? "bg-[#0078d7]" : ""} whitespace-pre`}>
          {r.text && <Mixed t={r.text} />}
        </span>
      </div>
      <div className={`w-[100px] ${cell} pl-[7px]`}>{r.bar && <Ic n="bar" s={17} />}</div>
      <div className={`w-[100px] ${cell} pl-[6px]`}>{r.path && <Check white={r.sel} />}</div>
      {[0, 1, 2].map((k) => (
        <div key={k} className={`w-[100px] ${cell}`}>{r.v && r.v[k] && <Mixed t={r.v[k]} />}</div>
      ))}
      <div className={`w-[100px] ${cell}`}>{r.f && <Mixed t="2000 mmpm" />}</div>
      <div className={`flex-1 h-full flex items-center pt-[2px] pl-[4px] ${r.sel ? "bg-[#0078d7]" : ""}`}>{r.f && <Mixed t="3000 rpm" />}</div>
    </div>
  );
};

const TreeLines = () => {
  const y = (i) => 224 + 20 * i;
  const minus = [[995.5, 2], [1014, 3], [1033, 4], [1033, 8], [1033, 12], [1033, 14], [1033, 17]];
  const d = [
    `M996 ${y(1)}V${y(2) - 4}M996 ${y(1)}h9`,
    `M1000 ${y(2)}h5M1018 ${y(3)}h5M1014 ${y(2) + 6}V${y(3) - 4}`,
    `M1033 ${y(3) + 8}V${y(26)}`,
    ...[4, 8, 12, 14, 17].map((i) => `M1037 ${y(i)}h5`),
    ...[22, 23, 24, 25, 26].map((i) => `M1033 ${y(i)}h9`),
    `M1052 ${y(4) + 5}V${y(7)}M1052 ${y(8) + 5}V${y(11)}M1052 ${y(12) + 5}V${y(13)}M1052 ${y(14) + 5}V${y(16)}M1052 ${y(17) + 5}V${y(21)}`,
    ...[5, 6, 7, 9, 10, 11, 13, 15, 16, 18, 19, 20, 21].map((i) => `M1052 ${y(i)}h10`),
  ].join("");
  return (
    <svg viewBox="986 214 201 720" className="absolute left-0 top-0 w-[201px] h-[720px] pointer-events-none">
      <path d={d} fill="none" stroke="#888" strokeWidth="1" strokeDasharray="1 1" />
      {minus.map(([x, i], k) => (
        <g key={k}>
          <rect x={x - 4} y={y(i) - 4} width="8" height="8" rx="1.500" fill="#f4f4f4" stroke="#8a8a8a" />
          <path d={`M${x - 2} ${y(i)}h5`} stroke="#222" />
        </g>
      ))}
    </svg>
  );
};

const Hole = ({ x, y, rx, ry, green }) => (
  <g>
    <ellipse cx={x} cy={y} rx={rx} ry={ry} fill="#ffc8c8" stroke="#333" strokeWidth="1.700" />
    <ellipse cx={x - 1} cy={y + 1} rx={rx - 1.500} ry={ry - 2} fill="#fff0f0" stroke="#333" strokeWidth="1.200" />
    <ellipse cx={x + 1} cy={y + 2} rx={rx - 3} ry={ry - 4} fill={green ? "url(#gHole)" : "url(#bHole)"} stroke="#333" strokeWidth="1.200" />
  </g>
);

const Lbl = ({ x, y, c, t, s = 11 }) => (
  <text x={x * 0.582} y={280 + y * 0.4719} fill={c} fontSize={s} fontFamily="'Liberation Sans',sans-serif" textAnchor="middle">{t}</text>
);

const Model = () => (
  <svg viewBox="0 165 907 850" className="block w-full h-full">
    <defs>
      <linearGradient id="gHole" x1="0" x2="1"><stop offset="0" stopColor="#50d050" /><stop offset=".4" stopColor="#10a020" /><stop offset="1" stopColor="#086010" /></linearGradient>
      <linearGradient id="bHole" x1="0" x2="1"><stop offset="0" stopColor="#e09090" /><stop offset=".5" stopColor="#a06868" /><stop offset="1" stopColor="#603c3c" /></linearGradient>
      <linearGradient id="cL" gradientUnits="userSpaceOnUse" x1="150" y1="1000" x2="245" y2="1000"><stop offset="0" stopColor="#e08686" /><stop offset="1" stopColor="#6a3f3f" /></linearGradient>
      <linearGradient id="cR" gradientUnits="userSpaceOnUse" x1="1130" y1="1200" x2="1340" y2="1150"><stop offset="0" stopColor="#6a3f3f" /><stop offset="1" stopColor="#e08686" /></linearGradient>
      <linearGradient id="cR2" gradientUnits="userSpaceOnUse" x1="1240" y1="1500" x2="1390" y2="1440"><stop offset="0" stopColor="#6a3f3f" /><stop offset="1" stopColor="#e08686" /></linearGradient>
    </defs>
    <g transform="translate(0 280) scale(.582 .4719)" strokeLinejoin="round">
      {P("M1425 1305L1455 1390 1408 1390z", "#d88080", "#333", 1.4)}
      {P("M1352 190L1480 625 1518 770 1518 870 1497 1050 1497 1190 1455 1390 1425 1305 1408 1390 1370 1268 1240 865z", "#e08686", "#5a3a3a", 1)}
      {P("M1360 210L1515 765M1480 625L1370 1268", "none", "#4a3030", 1.400)}
      {P("M150 890L245 973 300 1162Q210 1150 195 1090z", "url(#cL)")}
      {P("M215 975L275 1150M235 975L295 1160", "none", "#4a3030", 1.200)}
      {P("M245 973L1090 985 1215 1395 980 1395 925 1258 520 1250 510 1238 380 1232 350 1162 300 1162z", "#6a3f3f")}
      {P("M980 1395L1215 1395 1255 1530 1210 1530 1232 1560 1040 1560z", "#6a3f3f")}
      {P("M980 1395H1215", "none", "#3a2626", 1.400)}
      {P("M1090 985Q1200 975 1240 865L1370 1268Q1340 1380 1215 1395z", "url(#cR)")}
      {P("M1215 1395Q1340 1380 1370 1268L1405 1385 1395 1430Q1370 1510 1255 1530z", "url(#cR2)")}
      {P("M1215 1395Q1340 1380 1370 1268M1090 985L1255 1530M1115 980L1285 1520M1240 865L1400 1400M1250 860L1410 1390", "none", "#3a2626", 1.300)}
      <ellipse cx="1400" cy="370" rx="9" ry="40" fill="#eca4a4" stroke="#4a3030" strokeWidth="1.200" />
      <ellipse cx="1428" cy="675" rx="10" ry="40" fill="#eca4a4" stroke="#4a3030" strokeWidth="1.200" />
      <ellipse cx="1479" cy="862" rx="9" ry="40" fill="#eca4a4" stroke="#4a3030" strokeWidth="1.200" />
      <ellipse cx="1386" cy="1365" rx="14" ry="40" fill="#eaa8a8" stroke="#4a3030" strokeWidth="1.200" />
      {P("M240 195L132 825 135 860 140 890Q170 950 245 973L1090 985Q1200 975 1240 865L1230 835 1225 870Q1190 960 1085 965L245 950Q145 940 140 860L250 180z", "#e08686", "#4a3030", 1.300)}
      {P("M1090 985Q1200 975 1240 865L1230 835Q1215 960 1085 965z", "#ffabab", "#4a3030", 1.300)}
      {P("M395 62L1240 75Q1335 90 1352 190L1240 860 1232 840Q1215 960 1085 965L245 950Q145 940 140 860L250 180Q275 80 395 62z", "#ffc8c8", "#333", 1.500)}
      {P("M1340 180L1230 840M1335 170Q1325 95 1240 75", "none", "#333", 1.300)}
      {P("M1033 75L1072 75 920 962 882 962z", "#ffff40", "#222", 1.500)}
      <Hole x={367} y={182} rx={28} ry={29} green />
      <Hole x={1228} y={195} rx={28} ry={29} green />
      <Hole x={254} y={833} rx={28} ry={29} green />
      <Hole x={1115} y={847} rx={28} ry={29} green />
      <Hole x={812} y={325} rx={32} ry={33} />
      <Hole x={1085} y={345} rx={32} ry={33} />
      <Hole x={566} y={478} rx={48} ry={49} />
      <Hole x={1157} y={654} rx={32} ry={33} />
      <Hole x={997} y={848} rx={32} ry={33} />
      {P("M990 515L1062 517Q1072 518 1069 530L1050 640Q1048 652 1035 652L970 652Q960 652 962 642L982 525Q984 515 990 515z", "#e09090", "#806050", 1.800)}
      {P("M994 522L1060 524 1042 644 972 644z", "#e09090", "#c8a870", 3)}
      {P("M996 526L1058 528 1052 565 1000 565z", "#6a4040")}
      {P("M1004 545L1032 543 1046 565 1034 640 1004 644 990 600z", "#ffc800")}
      {P("M1018 575L1028 574 1018 610z", "#6a5040")}
      {P("M1052 548L1040 635", "none", "#fff", 3)}
      {P("M993 540L1015 610M984 565L998 610", "none", "#1830e0", 3)}
      {P("M738 513L702 392", "none", "#1840c8", 2.500)}
      {P("M702 388L696 420 712 415z", "#1840c8")}
      <ellipse cx="730" cy="480" rx="6" ry="7" fill="#c01818" />
      {P("M738 513L768 342", "none", "#30a040", 2.500)}
      {P("M768 338L759 372 772 372z", "#30a040")}
      <rect x="742" y="452" width="11" height="18" fill="#e01818" />
      {P("M738 513L905 516", "none", "#c83838", 2.500)}
      {P("M780 507L826 515 780 522zM876 508L912 516 876 523z", "#e84040")}
    </g>
    <Lbl x={752} y={331} c="#60a060" t="YM" />
    <Lbl x={718} y={383} c="#4858e0" t="ZM" />
    <Lbl x={739} y={414} c="#60a060" t="YC" />
    <Lbl x={735} y={442} c="#4858e0" t="ZC" />
    <Lbl x={742} y={425} c="#e03030" t="X" />
    <Lbl x={731} y={455} c="#e03030" t="Z" />
    <Lbl x={822} y={547} c="#d07070" t="XC" />
    <Lbl x={900} y={547} c="#d07070" t="XM" />
    <g>
      {P("M65 914l24-2 9 12-4 32-26 4-5-14z", "#9a9a9a", "#b8b8b8")}
      {P("M68 914l8 15 22-5M76 929l-4 30", "none", "#c0c0c0", .8)}
      {P("M67 945l6-33", "none", "#70a870", 2)}
      {P("M67 945l-9-28", "none", "#1840d0", 2)}
      {P("M67 947h40", "none", "#d02828", 2)}
      {P("M105 943l7 4-7 4z", "#d02828")}
      <circle cx="67" cy="947" r="4" fill="#d8d8d8" />
      <text x="72" y="908" fill="#60a060" fontSize="11" fontFamily="'Liberation Sans',sans-serif">Y</text>
      <text x="51" y="917" fill="#2850e0" fontSize="12" fontFamily="'Liberation Sans',sans-serif">Z</text>
      <text x="112" y="953" fill="#d02828" fontSize="12" fontFamily="'Liberation Sans',sans-serif">X</text>
    </g>
  </svg>
);

const WinBtn = ({ red, children }) => (
  <div className={`w-[20px] h-[20px] rounded-[3px] flex items-center justify-center border border-[#555] ${red ? "bg-gradient-to-b from-[#f07050] to-[#d83818]" : "bg-gradient-to-b from-[#6a6a6a] to-[#2a2a2a]"}`}>
    <svg width="14" height="14" viewBox="0 0 14 14">{children}</svg>
  </div>
);
const SubBtn = ({ children }) => (
  <div className="w-[17px] h-[16px] rounded-[3px] border border-[#888] bg-gradient-to-b from-[#f4f4f4] to-[#d0d0d0] flex items-center justify-center">
    <svg width="11" height="11" viewBox="0 0 11 11">{children}</svg>
  </div>
);

const Combo = ({ w, text }) => (
  <div className={`${w} h-[16px] bg-white border border-[#777] rounded-[3px] flex items-center justify-between overflow-hidden`}>
    <span className="pl-[2px] font-['Noto_Sans_CJK_SC',sans-serif] text-[12px] leading-none text-black">{text}</span>
    <span className="w-[17px] h-full bg-gradient-to-b from-[#d8e8f8] to-[#8ab4e0] flex items-center justify-center">
      <svg width="11" height="7" viewBox="0 0 11 7"><path d="M0 0h11L5.500 7z" fill="#102040" /></svg>
    </span>
  </div>
);

const Panel = ({ t }) => (
  <div className="h-[23px] border-b border-[#999] flex bg-gradient-to-b from-[#f8f8f8] from-50% to-[#d4d4d4] to-50%">
    <div className="flex-1 flex items-center pl-[5px] pb-[2px] font-['Noto_Sans_CJK_SC',sans-serif] text-[12px] font-bold text-[#222]">{t}</div>
    <div className="w-[23px] border-l border-white flex items-center justify-center">
      <svg width="12" height="10" viewBox="0 0 12 10"><path d="M1 1l5 5 5-5v3l-5 5-5-5z" fill="#666" /></svg>
    </div>
  </div>
);

export default function App() {
  return (
    <div className="relative w-[1920px] h-[1050px] overflow-hidden flex flex-col bg-[#d8d8d8] font-['Liberation_Sans',sans-serif] text-black select-none">
      {/* title bar */}
      <div className="h-[23px] shrink-0 flex items-center bg-gradient-to-b from-[#8a8a8a] via-[#1a1a1a] via-30% to-[#181818] border-b border-black text-white">
        <span className="w-[24px] flex justify-center"><Ic n="logo" s={19} /></span>
        <span className="text-[12.7px] whitespace-pre font-['Liberation_Sans','Noto_Sans_CJK_SC',sans-serif]">NX 8.5 - 加工 （无历史记录） - [19001-09.prt （修改的） ]</span>
        <span className="ml-auto mr-[28px] font-bold text-[13px] tracking-[.5px]">SIEMENS</span>
        <div className="flex gap-[3px] pr-[1px]">
          <WinBtn><path d="M3 9h7v2H3z" fill="#fff" /></WinBtn>
          <WinBtn><path d="M5 2h7v6H9M2 5h7v7H2z" fill="none" stroke="#fff" strokeWidth="1.400" /></WinBtn>
          <WinBtn red><path d="M2 2l10 10M12 2L2 12" stroke="#fff" strokeWidth="2.500" /></WinBtn>
        </div>
      </div>
      {/* menu */}
      <div className="h-[24px] shrink-0 flex items-center bg-gradient-to-b from-[#e6e6e6] to-[#dcdcdc] border-b border-[#b8b8b8] text-[#111] relative">
        <span className="w-[29px] pl-[7px] flex"><Ic n="nxMenu" s={17} /></span>
        <div className="flex gap-[13px]">
          {["文件(F)","编辑(E)","视图(V)","插入(S)","格式(R)","工具(T)","装配(A)","信息(I)","分析(L)","首选项(P)","窗口(O)","WNC TO NX","GC 工具箱","星空 V6.936F","帮助(H)","机明软件"].map((m) => (
            <span key={m} className="flex items-center"><Mixed t={m} /></span>
          ))}
        </div>
        <div className="absolute left-[1709px] top-[5px] w-[104px] h-[25px] flex rounded-[4px] border border-[#2196f3] overflow-hidden z-10">
          <span className="w-[30px] bg-[#2196f3] flex items-center justify-center">
            <svg width="20" height="18" viewBox="0 0 20 18"><circle cx="10" cy="6" r="3.500" fill="none" stroke="#fff" strokeWidth="2.200" /><circle cx="5" cy="12" r="3.500" fill="none" stroke="#fff" strokeWidth="2.200" /><circle cx="15" cy="12" r="3.500" fill="none" stroke="#fff" strokeWidth="2.200" /></svg>
          </span>
          <span className="flex-1 bg-gradient-to-b from-[#d8f0ff] to-[#c4e8ff] text-[#64b5f6] font-['Noto_Sans_CJK_SC',sans-serif] text-[12px] flex items-center justify-center">拖拽上传</span>
        </div>
        <div className="absolute right-[5px] top-[3px] flex gap-[2px]">
          <SubBtn><path d="M2 8h7v2H2z" fill="#555" /></SubBtn>
          <SubBtn><path d="M4 1h6v5H8M1 4h6v6H1z" fill="none" stroke="#555" strokeWidth="1.200" /></SubBtn>
          <SubBtn><path d="M2 2l7 7M9 2L2 9" stroke="#555" strokeWidth="2" /></SubBtn>
        </div>
      </div>
      {/* toolbars */}
      <div className="h-[34px] shrink-0 bg-gradient-to-b from-[#e4e4e4] to-[#d4d4d4] border-b border-[#bcbcbc]"><Bar items={row1} /></div>
      <div className="h-[35px] shrink-0 bg-gradient-to-b from-[#e2e2e2] to-[#c8c8c8] border-b border-[#8c8c8c]"><Bar items={row2} /></div>
      <div className="h-[27px] shrink-0 bg-gradient-to-b from-[#c4c4c4] to-[#dcdcdc] border-b border-[#f0f0f0] flex items-center pl-[6px] relative">
        <Combo w="w-[110px]" text="没有选择过滤器" />
        <span className="w-[8px]" />
        <Combo w="w-[117px]" text="整个装配" />
        <div className="ml-[5px] flex items-center">
          <span className="w-[22px] flex justify-center"><Ic n="sGear" s={18} /></span>
          <span className="w-[8px] h-[20px] border-l border-[#b0b0b0] ml-[4px]" />
          <span className="w-[22px] flex justify-center -ml-[4px]"><Ic n="sWhere" s={18} /></span>
          <span className="w-[20px] flex justify-center"><Ic n="sFunnel" s={16} /></span>
          <span className="w-[12px] flex justify-center"><Arrow /></span>
          <span className="w-[22px] flex justify-center"><Ic n="sSnap" s={18} /></span>
          <span className="w-[20px] flex justify-center"><Ic n="sBin" s={18} /></span>
          <span className="w-[7px] h-[20px] border-l border-[#b0b0b0] ml-[2px]" />
          <span className="w-[20px] flex justify-center"><Ic n="sRect" s={16} /></span>
          <span className="w-[14px] flex justify-center"><Arrow /></span>
          <span className="w-[6px] h-[20px] border-l border-[#b0b0b0]" />
          <span className="w-[22px] flex justify-center"><Ic n="sView" s={18} /></span>
          <span className="w-[24px] flex justify-center"><Ic n="sCube" s={18} /></span>
        </div>
        <span className="absolute right-[6px] top-[15px]"><Arrow /></span>
      </div>
      {/* status */}
      <div className="h-[22px] shrink-0 bg-[#dcdcdc] border-b-2 border-[#606060] flex items-center">
        <div className="w-[921px] h-full border-r border-[#aaa]" />
        <div className="flex-1 pl-[3px] flex items-center font-bold text-black"><Mixed t="CAM 加工工序‘PLANAR_MILL_1’已选定" bold /></div>
        <div className="w-[20px] h-full border-l border-[#b0b0b0]" />
        <div className="w-[58px] h-full border-l border-[#b0b0b0] flex items-center justify-end pr-[3px]"><Ic n="frameIcon" s={18} /></div>
      </div>
      {/* main */}
      <div className="flex-1 min-h-0 flex">
        <div className="w-[907px] shrink-0 bg-[#25262b]"><Model /></div>
        <div className="w-[68px] shrink-0 flex items-start bg-[#d2d2d2]">
          <div className="w-[34px] shrink-0 h-[770px] bg-gradient-to-b from-[#dcdcdc] to-[#cccccc] border-r border-b border-[#bbb] flex flex-col items-center">
            <div className="h-[9px] flex gap-[2px] items-center">{[0, 1, 2, 3, 4, 5].map((i) => <span key={i} className="block w-[2px] h-[2px] bg-[#999]" />)}</div>
            <div className="flex flex-col gap-[7px] mt-[1px]">
              {v1.map((n) => <Ic key={n} n={n} />)}
            </div>
            <span className="self-start ml-[6px] mt-[6px] w-0 h-0 border-y-[3px] border-y-transparent border-r-[4px] border-r-black" />
          </div>
          <div className="w-[34px] shrink-0 h-[278px] bg-gradient-to-b from-[#dcdcdc] to-[#d0d0d0] border-r border-b border-[#bbb] flex flex-col items-center">
            <div className="h-[9px] flex gap-[2px] items-center">{[0, 1, 2, 3, 4, 5].map((i) => <span key={i} className="block w-[2px] h-[2px] bg-[#999]" />)}</div>
            <div className="flex flex-col gap-[7px] mt-[5px]">
              {["millScreen","sCurve","ok1","ok2"].map((n) => <Ic key={n} n={n} />)}
            </div>
            <span className="block w-[30px] h-0 border-t border-[#eee] my-[5px]" />
            <div className="flex flex-col gap-[7px]">
              {["millArrow","simul","millClock","millArrows"].map((n) => <Ic key={n + 2} n={n} />)}
            </div>
            <span className="self-start ml-[6px] mt-[4px] w-0 h-0 border-y-[3px] border-y-transparent border-r-[4px] border-r-black" />
          </div>
        </div>
        <div className="w-[912px] shrink-0 bg-[#ececec] border-t border-[#a0a0a0] flex flex-col px-[10px] font-['Liberation_Mono',monospace]">
          <div className="h-[31px] shrink-0 flex items-center pl-[5px] pb-[1px] text-black font-bold">
            <Mixed t="工序导航器 - 程序顺序" bold />
            <span className="ml-auto mr-[2px]"><Ic n="pin" s={12} /></span>
          </div>
          <div className="h-[755px] w-[893px] shrink-0 border border-[#777] bg-white flex flex-col">
            <div className="h-[16px] shrink-0 flex border-b border-[#909090] bg-gradient-to-b from-[#f4f4f4] to-[#d8d8d8] font-['Noto_Sans_CJK_SC',sans-serif] text-[12px] leading-none text-[#222]">
              {[["名称", "w-[201px] pl-[6px]"], ["换刀", "w-[100px] pl-[6px]"], ["刀轨", "w-[100px] pl-[6px]"], ["刀具", "w-[100px] pl-[6px]"], ["余量", "w-[100px] pl-[6px]"], ["底面余量", "w-[100px] pl-[6px]"], ["进给", "w-[100px] pl-[6px]"], ["速度", "flex-1 pl-[6px]"]].map(([t, c]) => (
                <div key={t} className={`${c} h-full flex items-center pb-[2px] border-r border-[#a8a8a8]`}>{t}</div>
              ))}
            </div>
            <div className="relative h-[720px] shrink-0 overflow-hidden">
              {rows.map((r, i) => <Row key={i} r={r} i={i} />)}
              <TreeLines />
            </div>
            <div className="h-[17px] shrink-0 bg-[#efefef] flex items-center relative">
              <span className="w-[18px] flex justify-center text-[#333]"><svg width="6" height="9" viewBox="0 0 6 9"><path d="M5 0L1 4.500 5 9" fill="none" stroke="#444" strokeWidth="1.500" /></svg></span>
              <span className="w-[584px] h-[15px] bg-[#cacaca]" />
              <span className="ml-auto w-[18px] flex justify-center"><svg width="6" height="9" viewBox="0 0 6 9"><path d="M1 0l4 4.500L1 9" fill="none" stroke="#444" strokeWidth="1.500" /></svg></span>
            </div>
          </div>
          <div className="h-[12px] shrink-0 flex items-center">
            <span className="flex-1 max-w-[360px] h-0 border-t border-[#c8c8c8]" />
            <span className="w-[172px] h-[5px] bg-[#cccccc] border border-[#aaa]" />
            <span className="ml-[4px] w-[357px] h-0 border-t border-[#b8b8b8]" />
          </div>
          <div className="w-[893px] border border-[#c0c0c0] border-b-0">
            <Panel t="相依性" />
            <Panel t="细节" />
          </div>
        </div>
        <div className="w-[33px] shrink-0 bg-[#aaaaaa] border-l border-[#808080] relative">
          {tabs.map(([n, top, h]) => (
            <div
              key={n}
              className={`absolute left-0 flex items-center justify-center rounded-r-[4px] border border-l-0 ${n === "tOp" ? "w-[29px] bg-[#f2f2f2] border-[#bbb]" : "w-[26px] bg-gradient-to-b from-[#e2e2e2] to-[#cfcfcf] border-[#808080]"}`}
              style={{ top: top - 165, height: h }}
            >
              <Ic n={n} />
            </div>
          ))}
        </div>
      </div>
      {/* bottom */}
      <div className="h-[35px] shrink-0 bg-gradient-to-b from-[#e0e0e0] to-[#c8c8c8] border-t border-[#d8d8d8] relative">
        <span className="absolute left-[8px] top-[2px] w-[30px] h-[30px] rounded-[3px] bg-white/80 border border-[#707070]" />
        <div className="relative h-full"><Bar items={bottomBar} /></div>
      </div>
      {/* watermark */}
      <div className="absolute left-[1637px] top-[955px] flex items-start pointer-events-none">
        <svg width="72" height="82" viewBox="0 0 72 82" className="opacity-85">
          <path d="M36 0l35 20v41L36 82 0 61V20z" fill="#6cc0ea" fillOpacity=".9" />
          <path d="M36 0l35 20-18 10-17-10-17 10L0 20z" fill="#bfe4f7" fillOpacity=".9" />
          <path d="M0 20l17 10v20L0 61z" fill="#a6d6f1" />
          <path d="M17 30l19-11 18 11v21L36 62 17 51z" fill="#f0f0f0" fillOpacity=".7" />
          <path d="M36 24l17 9-17 9-17-9z" fill="#bfe0f4" />
          <path d="M19 33l17 9v18l-17-10z" fill="#a4d6f2" />
          <path d="M53 33l-17 9v18l17-10z" fill="#5fb4e2" />
        </svg>
        <div className="ml-[9px] mt-[13px] flex flex-col text-white/40">
          <span className="font-['Liberation_Sans','Noto_Sans_CJK_SC',sans-serif] font-bold text-[42px] leading-[40px] tracking-[1px] whitespace-nowrap">3D世界网</span>
          <span className="mt-[7px] font-['Liberation_Sans',sans-serif] font-bold text-[13px] leading-[13px] tracking-[1.7px] whitespace-nowrap">WWW.3DSJW.COM</span>
        </div>
      </div>
    </div>
  );
}
